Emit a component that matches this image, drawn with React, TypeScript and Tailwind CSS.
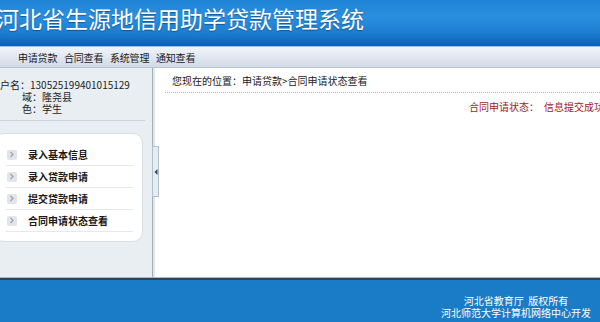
const menuItems = ["录入基本信息", "录入贷款申请", "提交贷款申请", "合同申请状态查看"];
const navItems = ["申请贷款", "合同查看", "系统管理", "通知查看"];

function ArrowIcon() {
  return (
    <span className="flex h-[10px] w-[10px] items-center justify-center rounded-[2px] bg-[#e1e4e8]">
      <svg width="6" height="7" viewBox="0 0 6 7">
        <path d="M1.5 1 L4 3.5 L1.5 6" fill="none" stroke="#9aa3ad" strokeWidth="1.2" />
      </svg>
    </span>
  );
}

export default function App() {
  return (
    <div className="flex h-[322px] w-[600px] flex-col overflow-hidden bg-white font-['Noto_Sans_CJK_SC','Noto_Sans',sans-serif] text-[10px] text-[#222]">
      <header className="h-[46px] shrink-0 overflow-hidden bg-[linear-gradient(to_bottom,#1f83d5_0%,#2a8fde_35%,#1d7dd0_72%,#0c60b5_100%)]">
        <h1 className="ml-[-4px] mt-[3px] whitespace-nowrap text-[23px] leading-[30px] text-white [text-shadow:0_1px_1px_rgba(0,40,90,0.5)]">
          河北省生源地信用助学贷款管理系统
        </h1>
      </header>
      <div className="h-px shrink-0 bg-[#9cc2e6]" />
      <nav className="flex h-[21px] shrink-0 items-center gap-[7px] border-b border-[#b9c4d0] bg-[linear-gradient(to_bottom,#f1f4fa,#d2dae5)] pl-[18px] text-[#1a1a1a]">
        {navItems.map((n) => (
          <span key={n} className="w-[39px] whitespace-nowrap tracking-[-0.2px]">
            {n}
          </span>
        ))}
      </nav>

      <main className="relative flex min-h-0 flex-1">
        <aside className="w-[152px] shrink-0 overflow-hidden bg-[#e9eef2]">
          <div className="ml-[-10px] pt-[11px] leading-[12px]">
            <p className="whitespace-nowrap">用户名：130525199401015129</p>
            <p className="whitespace-nowrap">
              <span className="inline-block w-[32px]">区</span>域：隆尧县
            </p>
            <p className="whitespace-nowrap">
              <span className="inline-block w-[32px]">角</span>色：学生
            </p>
          </div>
          <div className="mr-[7px] mt-[5px] h-px bg-[#cbd3db]" />
          <div className="ml-[-6px] mr-[9px] mt-[12px] rounded-[10px] border border-[#d9dee3] bg-white pb-[9px] pl-[11px] pr-[9px] pt-[10px]">
            {menuItems.map((m) => (
              <div key={m} className="flex h-[22px] items-center border-b border-[#e6e9ec] pl-[1px]">
                <ArrowIcon />
                <span className="ml-[11px] whitespace-nowrap font-bold text-[#1a1a1a]">{m}</span>
              </div>
            ))}
          </div>
        </aside>

        <div className="w-[3px] shrink-0 border-l border-[#a3aebb] bg-[#dfe6ec]" />
        <div className="absolute left-[152px] top-[78px] flex h-[51px] w-[7px] items-center justify-center border border-[#b3bfcb] bg-[#e6ecf2]">
          <svg width="4" height="6" viewBox="0 0 4 6">
            <path d="M3.5 0 L0.5 3 L3.5 6 Z" fill="#3c4650" />
          </svg>
        </div>

        <section className="min-w-0 flex-1 overflow-hidden bg-white">
          <div className="ml-[10px] border-b border-dotted border-[#b5b5b5] pb-[4px] pl-[7px] pt-[6px] leading-[14px]">
            您现在的位置：申请贷款&gt;合同申请状态查看
          </div>
          <p className="mt-[7px] whitespace-nowrap pl-[314px] leading-[14px] text-[#a3191b]">
            合同申请状态：<span className="ml-[5px]">信息提交成功</span>
          </p>
        </section>
      </main>

      <div className="h-px shrink-0 bg-[#aeb6be]" />
      <div className="h-[2px] shrink-0 bg-[#2e4356]" />
      <footer className="flex h-[42px] shrink-0 justify-end bg-[#1a7cc6] pr-[9px] pt-[15px] text-white">
        <div className="text-center leading-[12px]">
          <p>河北省教育厅&nbsp;&nbsp;版权所有</p>
          <p>河北师范大学计算机网络中心开发</p>
        </div>
      </footer>
    </div>
  );
}
